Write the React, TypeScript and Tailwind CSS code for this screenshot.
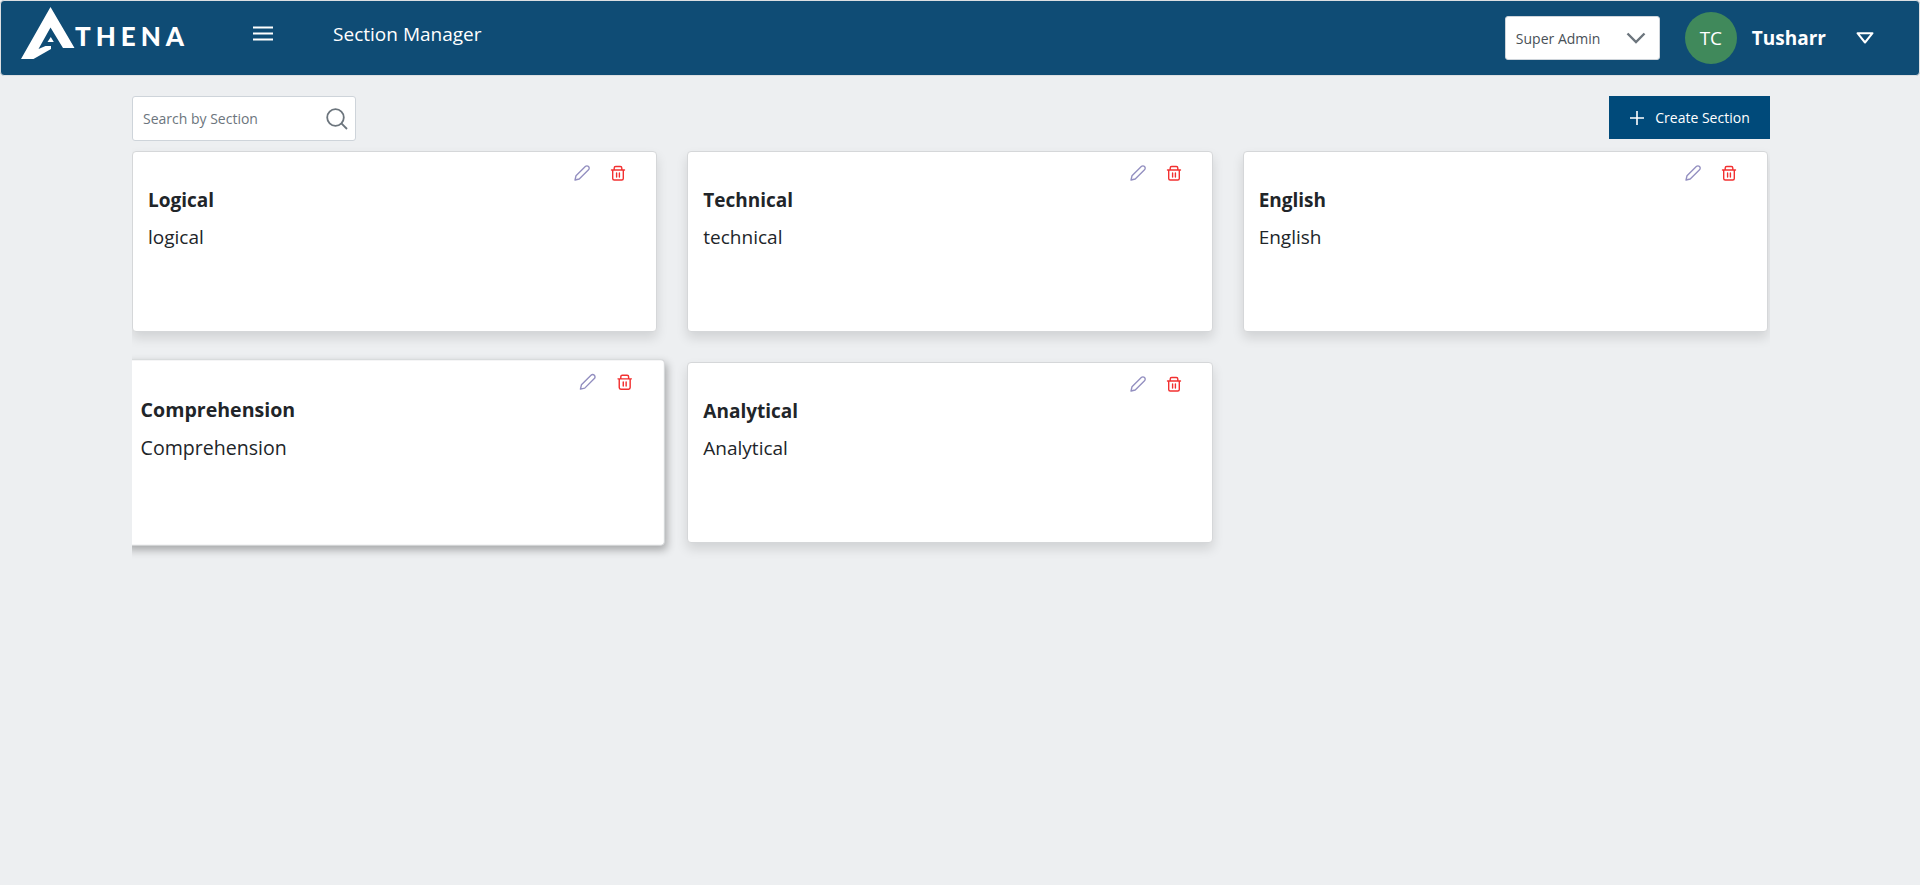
import React from "react";

type Section = { name: string; description: string; active?: boolean };

const sections: Section[] = [
  { name: "Logical", description: "logical" },
  { name: "Technical", description: "technical" },
  { name: "English", description: "English" },
  { name: "Comprehension", description: "Comprehension", active: true },
  { name: "Analytical", description: "Analytical" },
];

function Logo() {
  return (
    <a href="#home" aria-label="Athena" className="flex items-start text-white">
      <svg viewBox="0 0 54 52" className="h-[52px] w-[54px]" fill="currentColor" aria-hidden="true">
        <path
          fillRule="evenodd"
          d="M29.5 0 L53.5 41 H42 L29.5 20.5 L17.5 42 L24.5 39 H30 V42 L12.5 52 H0 Z M29.8 30 L32.8 35 H26.5 Z"
        />
      </svg>
      <span className="pt-[13px] font-[Lato] text-[26px] leading-[32px] font-black tracking-[5px]">THENA</span>
    </a>
  );
}

function PencilIcon() {
  return (
    <svg viewBox="0 0 24 24" className="h-[18px] w-[18px]" fill="none" stroke="#938fc0" strokeWidth="1.8" strokeLinejoin="round" strokeLinecap="round" aria-hidden="true">
      <path d="M16.4 3.3a2.9 2.9 0 0 1 4.3 4.3L8.3 20 2.7 21.3 4 15.7z" />
    </svg>
  );
}

function TrashIcon() {
  return (
    <svg viewBox="0 0 18 18" className="h-[18px] w-[18px]" fill="none" stroke="#f23030" strokeWidth="1.4" strokeLinejoin="round" strokeLinecap="round" aria-hidden="true">
      <path d="M2.500 6h13M3.700 6v8.500a1.500 1.500 0 0 0 1.500 1.500h7.600a1.500 1.500 0 0 0 1.500-1.500V6M5.200 5.700V4a1.500 1.500 0 0 1 1.500-1.500h4.600A1.500 1.500 0 0 1 12.800 4v1.700M7.600 9v4M10.400 9v4" />
    </svg>
  );
}

function SectionCard({ name, description, active }: Section) {
  const state = active
    ? "scale-[1.03] shadow-[2px_4px_8px_rgba(0,0,0,0.3)]"
    : "shadow-[0_6px_12px_rgba(0,0,0,0.12)]";
  return (
    <article className={`h-[181px] rounded-[4px] border border-[#d5d7d9] bg-white px-[15px] pt-[12px] ${state}`}>
      <div className="flex justify-end gap-[18px] pr-[14px]">
        <button type="button" aria-label={`Edit ${name}`}>
          <PencilIcon />
        </button>
        <button type="button" aria-label={`Delete ${name}`}>
          <TrashIcon />
        </button>
      </div>
      <h2 className="mt-[4px] text-[19px] leading-[28px] font-bold">{name}</h2>
      <p className="mt-[9px] text-[19px] leading-[28px]">{description}</p>
    </article>
  );
}

export default function App() {
  return (
    <div className="min-h-screen bg-[#edeff1] font-['Open_Sans','Noto_Sans',sans-serif] text-[#212529]">
      <header className="flex h-[76px] items-start rounded-[4px] border border-[#dcdfe2] bg-[#0f4c75] pt-[6px] pl-[20px] text-white">
        <Logo />
        <button type="button" aria-label="Toggle menu" className="mt-[19px] ml-[63px]">
          <svg viewBox="0 0 22 16" className="h-[16px] w-[22px]" stroke="currentColor" strokeWidth="2.2" aria-hidden="true">
            <path d="M1 1.5h20M1 7.5h20M1 13.5h20" />
          </svg>
        </button>
        <h1 className="mt-[12px] ml-[59px] text-[19px] leading-[30px]">Section Manager</h1>
        <div className="mt-[5px] ml-auto flex items-center pr-[45px]">
          <div className="relative">
            <select aria-label="Role" className="block h-[44px] w-[155px] appearance-none rounded-[3px] border border-[#ced4da] bg-white px-[10px] text-[14px] text-[#495057]">
              <option>Super Admin</option>
            </select>
            <svg viewBox="0 0 20 12" className="pointer-events-none absolute top-[16px] right-[14px] h-[12px] w-[20px]" fill="none" stroke="#6c757d" strokeWidth="2.4" aria-hidden="true">
              <path d="M1.5 1.5 10 10l8.5-8.5" />
            </svg>
          </div>
          <div className="ml-[25px] flex h-[52px] w-[52px] items-center justify-center rounded-full bg-[#40895b] text-[19px]">TC</div>
          <span className="ml-[15px] text-[19px] font-bold">Tusharr</span>
          <button type="button" aria-label="Account menu" className="ml-[30px]">
            <svg viewBox="0 0 18 12" className="h-[12px] w-[18px]" fill="none" stroke="currentColor" strokeWidth="2" strokeLinejoin="round" aria-hidden="true">
              <path d="M1.5 1.2h15L9 10.5z" />
            </svg>
          </button>
        </div>
      </header>
      <main className="mr-[150px] ml-[132px] pt-[20px]">
        <div className="flex items-start justify-between">
          <label className="flex h-[45px] w-[224px] items-center rounded-[3px] border border-[#ced4da] bg-white pr-[7px] pl-[10px]">
            <input
              type="text"
              aria-label="Search by Section"
              placeholder="Search by Section"
              className="min-w-0 flex-1 text-[14px] outline-none placeholder:text-[#6c757d]"
            />
            <svg viewBox="0 0 22 22" className="h-[22px] w-[22px]" fill="none" stroke="#6c757d" strokeWidth="1.8" aria-hidden="true">
              <circle cx="9.5" cy="9.5" r="8.3" />
              <path d="M15.4 15.4 21 21" />
            </svg>
          </label>
          <button type="button" className="flex h-[43px] w-[161px] items-center justify-center gap-[10px] bg-[#004a7a] text-[14px] text-white">
            <svg viewBox="0 0 16 16" className="h-[16px] w-[16px]" stroke="currentColor" strokeWidth="1.6" aria-hidden="true">
              <path d="M8 1v14M1 8h14" />
            </svg>
            Create Section
          </button>
        </div>
        <div className="grid grid-cols-3 gap-[30px] overflow-hidden pt-[10px] pr-[2px] pb-[20px]">
          {sections.map((section) => (
            <SectionCard key={section.name} {...section} />
          ))}
        </div>
      </main>
    </div>
  );
}
